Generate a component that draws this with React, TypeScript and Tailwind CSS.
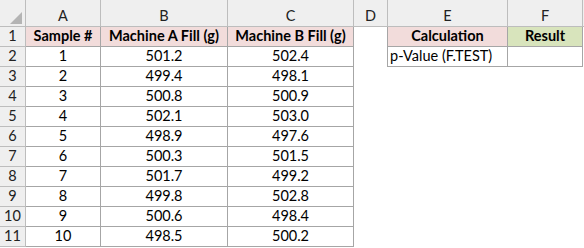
const cols = ["A", "B", "C", "D", "E", "F"];

const data = [
  ["1", "501.2", "502.4"],
  ["2", "499.4", "498.1"],
  ["3", "500.8", "500.9"],
  ["4", "502.1", "503.0"],
  ["5", "498.9", "497.6"],
  ["6", "500.3", "501.5"],
  ["7", "501.7", "499.2"],
  ["8", "499.8", "502.8"],
  ["9", "500.6", "498.4"],
  ["10", "498.5", "500.2"],
];

const grid =
  "grid grid-cols-[26px_75px_127px_126px_34px_120px_75px_1fr]";

function RowHead({ n }: { n: number }) {
  return (
    <div className="h-5 flex items-center justify-center bg-[#efefef] border-r border-b border-[#bdbdbd] text-[#222]">
      {n}
    </div>
  );
}

export default function App() {
  return (
    <div
      className="w-[584px] h-[248px] overflow-hidden bg-white text-[14.5px] leading-none text-black"
      style={{ fontFamily: "Lato, 'Liberation Sans', sans-serif" }}
    >
      {/* column headers */}
      <div className={grid}>
        <div className="h-[27px] bg-[#efefef] border-r border-b border-[#bdbdbd] relative">
          <div className="absolute left-[10px] top-[12px] w-0 h-0 border-l-[12px] border-l-transparent border-b-[12px] border-b-[#b4b4b4]" />
        </div>
        {cols.map((c) => (
          <div
            key={c}
            className="h-[27px] bg-[#efefef] border-r border-b border-[#bdbdbd] flex items-end justify-center pb-[3px] text-[#222]"
          >
            {c}
          </div>
        ))}
        <div className="h-[27px] bg-[#efefef] border-b border-[#bdbdbd]" />
      </div>

      {/* row 1 */}
      <div className={grid}>
        <RowHead n={1} />
        <div className="h-5 flex items-center justify-center bg-[#f2dcdb] border-r border-b border-[#a6a6a6] font-bold">
          Sample #
        </div>
        <div className="h-5 flex items-center justify-center bg-[#f2dcdb] border-r border-b border-[#a6a6a6] font-bold">
          Machine A Fill (g)
        </div>
        <div className="h-5 flex items-center justify-center bg-[#f2dcdb] border-r border-b border-[#a6a6a6] font-bold">
          Machine B Fill (g)
        </div>
        <div className="h-5 border-r border-[#a6a6a6]" />
        <div className="h-5 flex items-center justify-center bg-[#f2dcdb] border-r border-b border-[#a6a6a6] font-bold">
          Calculation
        </div>
        <div className="h-5 flex items-center justify-center bg-[#d8e4bc] border-r border-b border-[#a6a6a6] font-bold">
          Result
        </div>
        <div className="h-5" />
      </div>

      {data.map((r, i) => (
        <div key={i} className={grid}>
          <RowHead n={i + 2} />
          {r.map((v, j) => (
            <div
              key={j}
              className="h-5 flex items-center justify-center border-r border-b border-[#a6a6a6]"
            >
              {v}
            </div>
          ))}
          {i === 0 ? (
            <>
              <div className="h-5 border-r border-[#a6a6a6]" />
              <div className="h-5 flex items-center pl-[2px] border-r border-b border-[#a6a6a6]">
                p-Value (F.TEST)
              </div>
              <div className="h-5 border-r border-b border-[#a6a6a6]" />
            </>
          ) : (
            <>
              <div className="h-5" />
              <div className="h-5" />
              <div className="h-5" />
            </>
          )}
          <div className="h-5" />
        </div>
      ))}
    </div>
  );
}
